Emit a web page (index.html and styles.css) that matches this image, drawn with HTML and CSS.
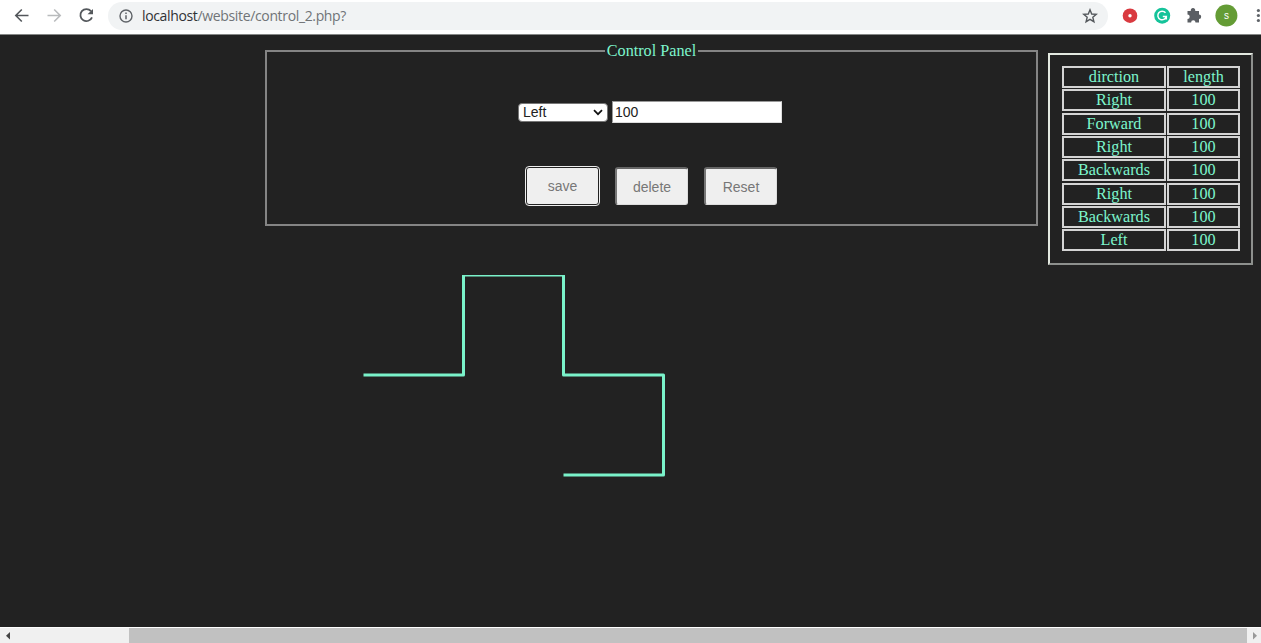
FILE: index.html
```html
<!DOCTYPE html>
<html lang="en">
<head>
<meta charset="utf-8">
<title>Control Panel</title>
<link rel="stylesheet" href="styles.css">
</head>
<body>
<header class="toolbar">
  <svg class="nav" width="108" height="32" viewBox="0 0 108 32" fill="none" stroke-width="1.6">
    <path d="M28.500 15.500H16M21.800 9.500L15.800 15.500L21.800 21.500" stroke="#53575b"/>
    <path d="M47.500 15.500H60M54.200 9.500L60.200 15.500L54.200 21.500" stroke="#b9bbbd"/>
    <path d="M91 11.200A6 6 0 1 0 92 17.300" stroke="#53575b" stroke-width="1.800"/>
    <path d="M93 9V14.300H87.500Z" fill="#53575b"/>
  </svg>
  <div class="address">
    <svg class="info" width="14" height="14" viewBox="0 0 14 14"><circle cx="7" cy="7" r="6" fill="none" stroke="#5f6368" stroke-width="1.400"/><path d="M7 6.200V10.300M7 3.500V5" stroke="#5f6368" stroke-width="1.500"/></svg>
    <span class="url"><span class="host">localhost</span>/website/control_2.php?</span>
    <svg class="star" width="16" height="16" viewBox="0 0 16 16"><path d="M8 1.800L9.700 6L14.300 6.300L10.800 9.200L11.900 13.700L8 11.300L4.100 13.700L5.200 9.200L1.700 6.300L6.300 6Z" fill="none" stroke="#55595d" stroke-width="1.400"/></svg>
  </div>
  <svg class="extensions" width="153" height="32" viewBox="0 0 153 32">
    <circle cx="22" cy="15.700" r="7.300" fill="#d93a40"/><circle cx="22" cy="15.700" r="1.700" fill="#fff"/>
    <circle cx="54.200" cy="15.700" r="8" fill="#15c39a"/>
    <path d="M57.500 12.800A4.300 4.300 0 1 0 58.300 16.500H54.800M58.300 16.500V19.500" fill="none" stroke="#fff" stroke-width="1.500"/>
    <path d="M79.500 11H82.800A2.300 2.300 0 1 1 87.200 11H91V14.500A2.200 2.200 0 1 1 91 18.900V22.500H87.500A2.200 2.200 0 0 0 83.100 22.500H79.500V18.900A2.200 2.200 0 0 0 79.500 14.500Z" fill="#5a5e63"/>
    <circle cx="118.400" cy="15.500" r="11" fill="#649c35"/>
    <text x="118.400" y="19" text-anchor="middle" class="avatar">s</text>
    <g fill="#5f6368"><circle cx="150.400" cy="10.500" r="1.600"/><circle cx="150.400" cy="15.500" r="1.600"/><circle cx="150.400" cy="20.500" r="1.600"/></g>
  </svg>
</header>
<main class="page">
  <div class="workspace">
    <fieldset class="panel">
      <legend>Control Panel</legend>
      <div class="fields">
        <div class="select">Left<svg width="10" height="7" viewBox="0 0 10 7"><path d="M1 1.200L5 5.200L9 1.200" fill="none" stroke="#111" stroke-width="1.700"/></svg></div>
        <input class="length" type="text" value="100">
      </div>
      <div class="actions">
        <button class="btn focused">save</button>
        <button class="btn">delete</button>
        <button class="btn">Reset</button>
      </div>
    </fieldset>
    <svg class="route" width="400" height="220" viewBox="0 0 400 220">
      <g fill="none" stroke="#7fffd4" stroke-opacity=".94" stroke-width="3" stroke-linejoin="round">
        <path d="M.5 100H100.500V0H200.500V100H300.500V200H200.500"/>
      </g>
    </svg>
  </div>
  <div class="moves">
    <div>dirction</div><div>length</div>
    <div>Right</div><div>100</div>
    <div>Forward</div><div>100</div>
    <div>Right</div><div>100</div>
    <div>Backwards</div><div>100</div>
    <div>Right</div><div>100</div>
    <div>Backwards</div><div>100</div>
    <div>Left</div><div>100</div>
  </div>
</main>
<footer class="scrollbar">
  <svg class="arrow" width="14" height="15" viewBox="0 0 14 15"><path d="M10 4V11.500L6 7.750Z" fill="#444"/></svg>
  <div class="thumb"></div>
  <svg class="arrow" width="14" height="15" viewBox="0 0 14 15"><path d="M6 4V11.500L10 7.750Z" fill="#999"/></svg>
</footer>
</body>
</html>
```
FILE: styles.css
```css
* { box-sizing: border-box; }
body {
  margin: 0;
  height: 643px;
  display: flex;
  flex-direction: column;
  overflow: hidden;
  background: #222;
  font-family: "Liberation Serif", serif;
  font-size: 16px;
  color: #7df5cd;
}
svg { display: block; flex: none; }
.toolbar {
  height: 35px;
  flex: none;
  display: flex;
  background: #fff;
  border-bottom: 1px solid #858786;
}
.address {
  width: 1000px;
  height: 28px;
  margin-top: 2px;
  padding: 0 10px 0 11px;
  display: flex;
  align-items: center;
  border-radius: 14px;
  background: #f1f3f4;
}
.url {
  flex: 1;
  margin-left: 9px;
  font: 14px/20px "Open Sans", sans-serif;
  letter-spacing: -0.35px;
  color: #707477;
}
.host { color: #303235; }
.avatar { font: 10px "Liberation Sans", sans-serif; fill: #fff; }
.page {
  flex: 1;
  display: flex;
  align-items: flex-start;
  gap: 10px;
  padding: 7px 0 0 265px;
}
.workspace { width: 773px; flex: none; }
.panel {
  height: 184px;
  margin: 0;
  padding: 40px 0 0;
  border: 2px solid #858585;
}
.panel legend {
  margin: 0 auto;
  padding: 0 2px;
  font-size: 16.2px;
  line-height: 18px;
}
.fields {
  display: flex;
  align-items: center;
  justify-content: center;
  gap: 4px;
  margin-top: 1px;
  padding-right: 3px;
}
.select {
  width: 90px;
  height: 19px;
  display: flex;
  align-items: center;
  justify-content: space-between;
  padding: 0 4px;
  border: 1px solid #767676;
  border-radius: 4px;
  background: #fff;
  color: #222;
  font: 14px "Liberation Sans", sans-serif;
}
.length {
  width: 170px;
  height: 22px;
  padding: 0 2px;
  border: 1px solid;
  border-color: #999 #ddd #ddd #999;
  background: #fff;
  color: #222;
  font: 14px "Liberation Sans", sans-serif;
}
.actions {
  display: flex;
  justify-content: center;
  gap: 16px;
  margin-top: 44px;
}
.btn {
  width: 73px;
  height: 38px;
  padding: 0;
  border: 1px solid;
  border-width: 2px 1px 1px 2px;
  border-color: #666 #ddd #ddd #777;
  border-radius: 3px;
  background: #efefef;
  color: #777;
  font: 14px "Liberation Sans", sans-serif;
}
.focused {
  border: 1px solid #222;
  outline: 1px solid #eee;
}
.route { margin: 49px 0 0 98px; }
.moves {
  width: 205px;
  height: 212px;
  margin-top: 11px;
  padding: 11px 11px 12px 12px;
  display: grid;
  grid-template-columns: 104px 73px;
  grid-auto-rows: 22px;
  column-gap: 1px;
  row-gap: 1.33px;
  border: 2px solid;
  border-color: #e3e9e0 #8d908d #8d908d #e3e9e0;
  font-size: 16.2px;
}
.moves div {
  display: flex;
  align-items: center;
  justify-content: center;
  border: 2px solid #d4d4d4;
  line-height: 18px;
}
.scrollbar {
  height: 16px;
  flex: none;
  display: flex;
  background: #f0f0f0;
  border-top: 1px solid #fff;
}
.thumb { flex: 1; margin-left: 115px; background: #c1c1c1; }
```
